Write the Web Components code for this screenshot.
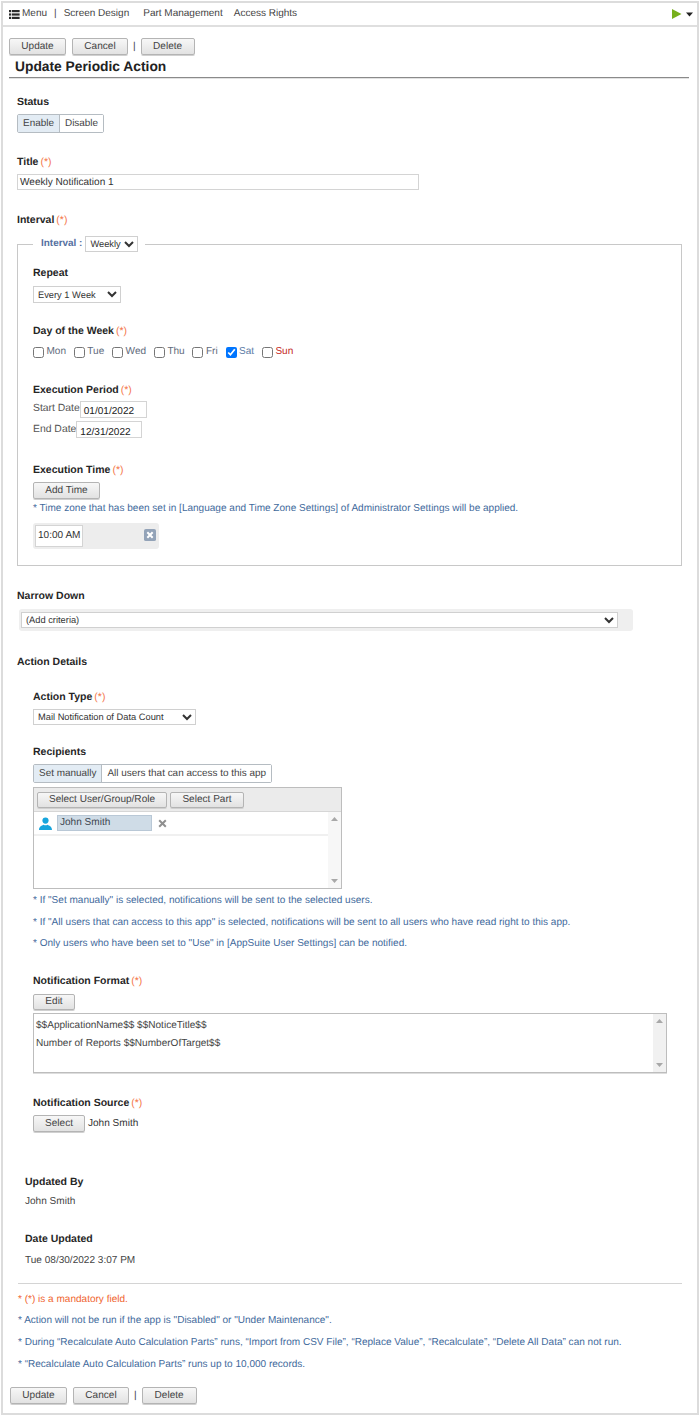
<!DOCTYPE html>
<html lang="en">
<head>
<meta charset="utf-8">
<title>Update Periodic Action</title>
<style>
  html, body { margin: 0; padding: 0; background: #fff; }
  body {
    font-family: "Liberation Sans", Arial, sans-serif;
    font-size: 10.05px;
    line-height: 14px;
    color: #333;
    text-rendering: geometricPrecision;
  }
</style>
</head>
<body>
<app-frame>
  <top-nav></top-nav>

  <button-row style="margin:11px 0 0 6px">
    <form-button w="57">Update</form-button>
    <form-button w="56" style="margin-left:6px">Cancel</form-button>
    <span style="margin:0 5px;color:#444">|</span>
    <form-button w="54">Delete</form-button>
  </button-row>
  <page-title>Update Periodic Action</page-title>

  <form-field label="Status" style="margin:17px 0 0 14px">
    <seg-toggle style="margin-top:-1px"><seg-option active>Enable</seg-option><seg-option>Disable</seg-option></seg-toggle>
  </form-field>

  <form-field label="Title" required style="margin:22px 0 0 14px">
    <text-box w="402" h="16" style="margin-top:-1px">Weekly Notification 1</text-box>
  </form-field>

  <form-field label="Interval" required style="margin:23px 0 0 14px"></form-field>

  <interval-box style="margin:9px 0 0 14px">
    <form-field label="Repeat">
      <plain-select w="88" h="17" options="Every 1 Week"></plain-select>
    </form-field>

    <form-field label="Day of the Week" required style="margin-top:21px">
      <div style="display:flex;height:14px;margin-top:7px">
        <day-check>Mon</day-check><day-check>Tue</day-check><day-check>Wed</day-check><day-check>Thu</day-check><day-check>Fri</day-check><day-check checked tone="#5b7ba6">Sat</day-check><day-check tone="#c4281c">Sun</day-check>
      </div>
    </form-field>

    <form-field label="Execution Period" required style="margin-top:24px">
      <date-row label="Start Date" w="67" lift="1" style="margin-top:-1px">01/01/2022</date-row>
      <date-row label="End Date" w="66" lift="2" style="margin-top:4px">12/31/2022</date-row>
    </form-field>

    <form-field label="Execution Time" required style="margin-top:23px">
      <form-button w="67" h="17" style="margin-top:-1px">Add Time</form-button>
      <note-line style="margin-top:3px">* Time zone that has been set in [Language and Time Zone Settings] of Administrator Settings will be applied.</note-line>
      <time-slot style="margin-top:7px">10:00 AM</time-slot>
    </form-field>
  </interval-box>

  <form-field label="Narrow Down" style="margin:23px 0 0 14px">
    <criteria-bar><plain-select w="597" h="16" options="(Add criteria)"></plain-select></criteria-bar>
  </form-field>

  <form-field label="Action Details" style="margin:24px 0 0 14px"></form-field>

  <form-field label="Action Type" required style="margin:21px 0 0 30px">
    <plain-select w="163" h="16" options="Mail Notification of Data Count" style="margin-top:-1px"></plain-select>
  </form-field>

  <form-field label="Recipients" style="margin:20px 0 0 30px">
    <seg-toggle style="margin-top:-1px"><seg-option active>Set manually</seg-option><seg-option>All users that can access to this app</seg-option></seg-toggle>
    <recipient-table style="margin-top:4px">
      <form-button w="130" h="16" slot="tools">Select User/Group/Role</form-button>
      <form-button w="74" h="16" slot="tools">Select Part</form-button>
      <user-chip>John Smith</user-chip>
    </recipient-table>
    <note-line style="margin-top:5px">* If "Set manually" is selected, notifications will be sent to the selected users.</note-line>
    <note-line style="margin-top:8px">* If "All users that can access to this app" is selected, notifications will be sent to all users who have read right to this app.</note-line>
    <note-line style="margin-top:7px">* Only users who have been set to "Use" in [AppSuite User Settings] can be notified.</note-line>
  </form-field>

  <form-field label="Notification Format" required style="margin:23px 0 0 30px">
    <form-button w="42" h="16">Edit</form-button>
    <format-box style="margin-top:3px">
      <div>$$ApplicationName$$ $$NoticeTitle$$</div>
      <div>Number of Reports $$NumberOfTarget$$</div>
    </format-box>
  </form-field>

  <form-field label="Notification Source" required style="margin:23px 0 0 30px">
    <div style="display:flex;align-items:center;margin-top:-1px">
      <form-button w="52" h="17">Select</form-button>
      <span style="margin-left:3px">John Smith</span>
    </div>
  </form-field>

  <info-item label="Updated By" style="margin:43px 0 0 22px">John Smith</info-item>
  <info-item label="Date Updated" gap="8" style="margin:23px 0 0 22px">Tue 08/30/2022 3:07 PM</info-item>

  <hr-line></hr-line>

  <note-line tone="#f0652f" style="margin:9px 0 0 15px">* (*) is a mandatory field.</note-line>
  <note-line style="margin:7px 0 0 15px">* Action will not be run if the app is "Disabled" or "Under Maintenance".</note-line>
  <note-line style="margin:8px 0 0 15px">* During “Recalculate Auto Calculation Parts” runs, “Import from CSV File”, “Replace Value”, “Recalculate”, “Delete All Data” can not run.</note-line>
  <note-line style="margin:8px 0 0 15px">* “Recalculate Auto Calculation Parts” runs up to 10,000 records.</note-line>

  <button-row style="margin:15px 0 0 7px">
    <form-button w="57">Update</form-button>
    <form-button w="56" style="margin-left:6px">Cancel</form-button>
    <span style="margin:0 5px;color:#444">|</span>
    <form-button w="55">Delete</form-button>
  </button-row>
</app-frame>

<script>
// small helper so every element gets an open shadow root with its own styles
function shadow(el, html) {
  el.attachShadow({ mode: 'open' }).innerHTML = html;
}

class AppFrame extends HTMLElement {
  connectedCallback() {
    shadow(this, `<style>
      :host { display: block; box-sizing: border-box; width: 698px; height: 1414px; margin: 1px 0 0 1px;
        border: 2px solid #dcdcdc; overflow: hidden; }
    </style><slot></slot>`);
  }
}

class TopNav extends HTMLElement {
  connectedCallback() {
    shadow(this, `<style>
      :host { display: flex; align-items: center; height: 22px; border-bottom: 2px solid #dfdfdf; font-size: 10px; color: #444; }
      .menu { display: flex; align-items: center; margin-left: 6px; }
      svg { display: block; }
      .sep { margin: 0 7px 0 7px; }
      .link { margin-right: 14px; }
      .link + .link { margin-right: 11px; }
      .end { margin-left: auto; display: flex; align-items: center; margin-right: 4px; }
    </style>
    <span class="menu">
      <svg width="11" height="9" viewBox="0 0 12 9" preserveAspectRatio="none" style="margin-right:2px" fill="#2b2b2b">
        <rect x="0" y="0" width="2.4" height="2.2"/><rect x="3.2" y="0" width="8.4" height="2.2"/>
        <rect x="0" y="3.4" width="2.4" height="2.2"/><rect x="3.2" y="3.4" width="8.4" height="2.2"/>
        <rect x="0" y="6.8" width="2.4" height="2.2"/><rect x="3.2" y="6.8" width="8.4" height="2.2"/>
      </svg>Menu</span>
    <span class="sep">|</span>
    <span class="link">Screen Design</span>
    <span class="link">Part Management</span>
    <span class="link">Access Rights</span>
    <span class="end">
      <svg width="11" height="12" viewBox="0 0 11 12"><path d="M1 1 L10.5 6 L1 11 Z" fill="#78b01c"/></svg>
      <svg width="7" height="5" viewBox="0 0 7 5" style="margin-left:4px"><path d="M0 0.5 H7 L3.5 4.5 Z" fill="#222"/></svg>
    </span>`);
  }
}

class ButtonRow extends HTMLElement {
  connectedCallback() {
    shadow(this, `<style>:host { display: flex; align-items: center; height: 17px; }</style><slot></slot>`);
  }
}

class FormButton extends HTMLElement {
  connectedCallback() {
    const w = this.getAttribute('w') || 56;
    const h = this.getAttribute('h') || 17;
    shadow(this, `<style>
      :host { display: inline-flex; align-items: center; justify-content: center; box-sizing: border-box;
        width: ${w}px; height: ${h}px; flex: none; border: 1px solid #b4b4b4; border-radius: 2px;
        background: linear-gradient(#f7f7f7, #e2e2e2); box-shadow: 0 1px 0 #d0d0d0; color: #444; font-size: 10.05px; }
    </style><slot></slot>`);
  }
}

class PageTitle extends HTMLElement {
  connectedCallback() {
    shadow(this, `<style>
      :host { display: block; box-sizing: border-box; width: 680px; height: 22px; margin: 1px 0 0 6px; padding: 1px 0 0 6px;
        border-bottom: 1px solid #8a8a8a; box-shadow: 0 1px 0 #e2e2e2; font-size: 13.8px; line-height: 19px; font-weight: bold; color: #222; }
    </style><slot></slot>`);
  }
}

class FormField extends HTMLElement {
  connectedCallback() {
    const req = this.hasAttribute('required');
    shadow(this, `<style>
      :host { display: block; }
      .label { display: block; height: 14px; line-height: 14px; font-size: 10.5px; font-weight: bold; color: #262626; }
      .req { font-weight: normal; color: #f4764a; margin-left: 2px; }
      .body { margin-top: 6px; }
      .body.none { display: none; }
    </style>
    <span class="label">${this.getAttribute('label')}${req ? '<span class="req">(*)</span>' : ''}</span>
    <div class="body ${this.childElementCount ? '' : 'none'}"><slot></slot></div>`);
  }
}

class SegToggle extends HTMLElement {
  connectedCallback() {
    shadow(this, `<style>
      :host { display: flex; width: fit-content; box-sizing: border-box; height: 19px; border: 1px solid #b5bcc2; border-radius: 2px; }
    </style><slot></slot>`);
  }
}

class SegOption extends HTMLElement {
  connectedCallback() {
    shadow(this, `<style>
      :host { display: flex; align-items: center; padding: 0 5px; background: #fff; color: #444; font-size: 9.95px; }
      :host([active]) { background: #e3ecf4; border-right: 1px solid #b5bcc2; }
    </style><slot></slot>`);
  }
}

class TextBox extends HTMLElement {
  connectedCallback() {
    shadow(this, `<style>
      :host { display: block; box-sizing: border-box; width: ${this.getAttribute('w')}px; height: ${this.getAttribute('h')}px;
        border: 1px solid #d4d4d4; padding-left: 2px; line-height: 15px; font-size: 10.05px; color: #333; background: #fff; }
    </style><slot></slot>`);
  }
}

// native select so the arrow is the browser's own
class PlainSelect extends HTMLElement {
  connectedCallback() {
    const w = this.getAttribute('w'), h = this.getAttribute('h');
    const tone = this.getAttribute('tone') || '#333';
    const opts = this.getAttribute('options').split('|').map(o => `<option>${o}</option>`).join('');
    shadow(this, `<style>
      :host { display: block; width: ${w}px; height: ${h}px; }
      select { display: block; box-sizing: border-box; width: 100%; height: 100%; margin: 0; padding: 0; border: 1px solid #d0d0d0; border-radius: 0; outline: 0;
        background-color: #fff; font: 9.3px "Liberation Sans", Arial, sans-serif; color: ${tone}; text-rendering: geometricPrecision; }
    </style><select>${opts}</select>`);
  }
}

class IntervalBox extends HTMLElement {
  connectedCallback() {
    shadow(this, `<style>
      :host { display: block; width: 665px; }
      fieldset { margin: 0; padding: 14px 15px 16px 15px; border: 1px solid #c8c8c8; min-width: 0; }
      legend { display: flex; align-items: center; height: 16px; margin-left: 0; padding: 0 7px 0 8px; font-size: 9.95px; font-weight: bold; color: #55709f; }
      plain-select { margin-left: 3px; }
    </style>
    <fieldset>
      <legend>Interval :<plain-select w="53" h="16" options="Weekly"></plain-select></legend>
      <slot></slot>
    </fieldset>`);
  }
}

class DayCheck extends HTMLElement {
  connectedCallback() {
    const tone = this.getAttribute('tone') || '#5f6b7c';
    shadow(this, `<style>
      :host { display: flex; align-items: center; margin-right: 7.8px; font-size: 10.05px; color: ${tone}; }
      input { width: 11px; height: 11px; margin: 0 2.5px 0 0; }
    </style><input type="checkbox" ${this.hasAttribute('checked') ? 'checked' : ''}><slot></slot>`);
  }
}

class DateRow extends HTMLElement {
  connectedCallback() {
    const lift = Number(this.getAttribute('lift') || 0);
    shadow(this, `<style>
      :host { display: flex; height: 17px; font-size: 10.4px; color: #555; line-height: 14px; }
      text-box { color: #222; line-height: ${17 + lift * 2}px; padding-left: 3px; margin-top: -${lift}px; }
    </style>${this.getAttribute('label')}<text-box w="${this.getAttribute('w')}" h="17"><slot></slot></text-box>`);
  }
}

class NoteLine extends HTMLElement {
  connectedCallback() {
    shadow(this, `<style>
      :host { display: block; height: 14px; line-height: 14px; font-size: 10.04px; white-space: nowrap; color: ${this.getAttribute('tone') || '#3f6a9c'}; }
    </style><slot></slot>`);
  }
}

class TimeSlot extends HTMLElement {
  connectedCallback() {
    shadow(this, `<style>
      :host { display: flex; align-items: center; justify-content: space-between; box-sizing: border-box; width: 126px; height: 26px; padding: 0 3px 0 2px;
        background: #ededed; border-radius: 3px; }
      text-box { color: #333; line-height: 20px; }
      svg { display: block; margin-top: -2px; }
    </style>
    <text-box w="48" h="22"><slot></slot></text-box>
    <svg width="12" height="12" viewBox="0 0 13 13"><rect width="13" height="13" rx="2" fill="#93a3b8"/><path d="M3.6 3.6 L9.4 9.4 M9.4 3.6 L3.6 9.4" stroke="#fff" stroke-width="2.2"/></svg>`);
  }
}

class CriteriaBar extends HTMLElement {
  connectedCallback() {
    shadow(this, `<style>
      :host { display: block; box-sizing: border-box; width: 614px; height: 22px; margin: 1px 0 0 2px; padding: 3px 0 0 2px; background: #efefef; border-radius: 3px; }
    </style><slot></slot>`);
  }
}

class ScrollTrack extends HTMLElement {
  connectedCallback() {
    shadow(this, `<style>
      :host { display: flex; flex-direction: column; justify-content: space-between; align-items: center; box-sizing: border-box; width: 13px; padding: 5px 0; background: #f1f1f1; flex: none; }
      svg { display: block; }
    </style>
    <svg width="7" height="4" viewBox="0 0 7 4"><path d="M0 4 L3.5 0 L7 4 Z" fill="#a8a8a8"/></svg>
    <svg width="7" height="4" viewBox="0 0 7 4"><path d="M0 0 L3.5 4 L7 0 Z" fill="#a8a8a8"/></svg>`);
  }
}

class RecipientTable extends HTMLElement {
  connectedCallback() {
    shadow(this, `<style>
      :host { display: block; box-sizing: border-box; width: 309px; height: 102px; border: 1px solid #bdbdbd; }
      .tools { display: flex; gap: 3px; box-sizing: border-box; height: 24px; padding: 4px 0 0 3px; background: #ebebeb; border-bottom: 1px solid #d6d6d6; }
      .list { display: flex; height: 76px; }
      .rows { flex: 1; }
      scroll-track { background: #f7f7f7; }
    </style>
    <div class="tools"><slot name="tools"></slot></div>
    <div class="list"><div class="rows"><slot></slot></div><scroll-track></scroll-track></div>`);
  }
}

class UserChip extends HTMLElement {
  connectedCallback() {
    shadow(this, `<style>
      :host { display: flex; align-items: center; box-sizing: border-box; height: 24px; padding: 0 0 0 5px; border-bottom: 2px solid #f0f0f0; }
      svg { display: block; flex: none; }
      .name { box-sizing: border-box; width: 95px; height: 16px; margin-left: 5px; padding-left: 2px; line-height: 14px; background: #cfdce7; border: 1px solid #b9c8d6; color: #3d4650; font-size: 10.05px; }
    </style>
    <svg width="13" height="13" viewBox="0 0 13 13" fill="#17a5dd"><circle cx="6.5" cy="3.6" r="3.1"/><path d="M0 13 C0 9.5 3 8.6 4.6 7.8 C5.6 8.5 7.4 8.5 8.4 7.8 C10 8.6 13 9.5 13 13 Z"/></svg>
    <span class="name"><slot></slot></span>
    <svg width="9" height="9" viewBox="0 0 9 9" style="margin-left:6px"><path d="M1.2 1.2 L7.8 7.8 M7.8 1.2 L1.2 7.8" stroke="#8f8f8f" stroke-width="2"/></svg>`);
  }
}

class FormatBox extends HTMLElement {
  connectedCallback() {
    shadow(this, `<style>
      :host { display: flex; box-sizing: border-box; width: 634px; height: 60px; border: 1px solid #bdbdbd; box-shadow: 0 1px 0 #ddd; font-size: 10.05px; color: #444; }
      .text { flex: 1; padding: 3px 0 0 2px; line-height: 18px; }
    </style><div class="text"><slot></slot></div><scroll-track></scroll-track>`);
  }
}

class InfoItem extends HTMLElement {
  connectedCallback() {
    const gap = this.getAttribute('gap') || 6;
    shadow(this, `<style>
      :host { display: block; font-size: 10.05px; color: #444; }
      b { display: block; height: 14px; font-size: 10.5px; color: #262626; }
      div { margin-top: ${gap}px; height: 14px; }
    </style><b>${this.getAttribute('label')}</b><div><slot></slot></div>`);
  }
}

class HrLine extends HTMLElement {
  connectedCallback() {
    shadow(this, `<style>:host { display: block; width: 664px; height: 1px; margin: 15px 0 0 15px; background: #d4d4d4; }</style>`);
  }
}

customElements.define('app-frame', AppFrame);
customElements.define('top-nav', TopNav);
customElements.define('button-row', ButtonRow);
customElements.define('form-button', FormButton);
customElements.define('page-title', PageTitle);
customElements.define('form-field', FormField);
customElements.define('seg-toggle', SegToggle);
customElements.define('seg-option', SegOption);
customElements.define('text-box', TextBox);
customElements.define('plain-select', PlainSelect);
customElements.define('interval-box', IntervalBox);
customElements.define('day-check', DayCheck);
customElements.define('date-row', DateRow);
customElements.define('note-line', NoteLine);
customElements.define('time-slot', TimeSlot);
customElements.define('criteria-bar', CriteriaBar);
customElements.define('scroll-track', ScrollTrack);
customElements.define('recipient-table', RecipientTable);
customElements.define('user-chip', UserChip);
customElements.define('format-box', FormatBox);
customElements.define('info-item', InfoItem);
customElements.define('hr-line', HrLine);
</script>
</body>
</html>
